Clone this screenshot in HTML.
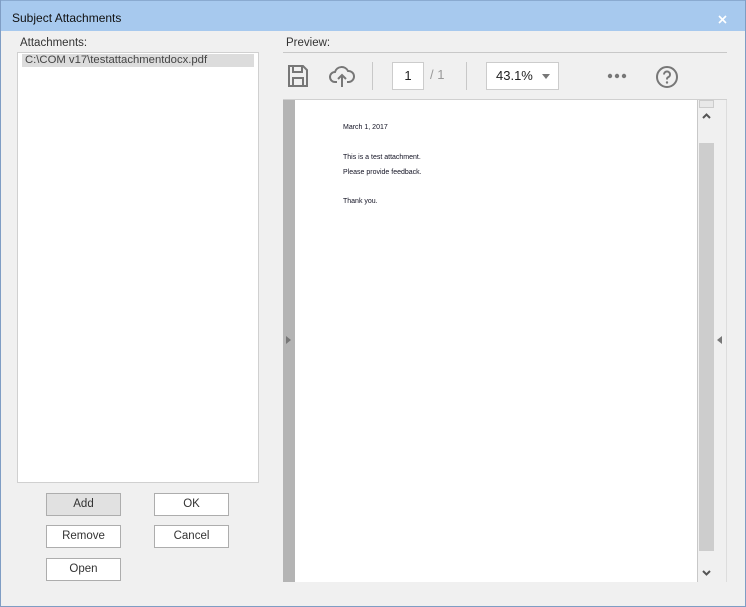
<!DOCTYPE html>
<html><head><style>
*{margin:0;padding:0;box-sizing:border-box}
body{width:746px;height:607px;background:#f0f0f0;font-family:"Liberation Sans",sans-serif;font-size:11px;color:#222;position:relative;overflow:hidden}
.a{position:absolute}
.win{left:0;top:0;width:746px;height:607px;border:1px solid #7f9dc4;border-top:none}
.title{left:0;top:0;width:746px;height:31px;background:#a7c9ee;border-top:1px solid #8aaad0}
.btn{position:absolute;width:75px;height:23px;border:1px solid #adadad;background:#fff;text-align:center;line-height:21px;font-size:11.5px;color:#333}
</style></head><body>
<div class="a title"></div>
<div class="a" style="left:12px;top:11px;font-size:12px;color:#111">Subject Attachments</div>
<svg class="a" style="left:718px;top:15px" width="9" height="9" viewBox="0 0 9 9"><path d="M1 1l7 7M8 1l-7 7" stroke="#fff" stroke-width="1.6"/></svg>
<div class="a win"></div>
<div class="a" style="left:20px;top:37px;color:#333;font-size:11.5px">Attachments:</div>
<div class="a" style="left:17px;top:52px;width:242px;height:431px;background:#fff;border:1px solid #d0d0d0"></div>
<div class="a" style="left:22px;top:54px;width:232px;height:13px;background:#dcdcdc"></div>
<div class="a" style="left:25px;top:54px;color:#444;font-size:11.3px">C:\COM v17\testattachmentdocx.pdf</div>
<div class="btn" style="left:46px;top:493px;background:#e1e1e1">Add</div>
<div class="btn" style="left:154px;top:493px">OK</div>
<div class="btn" style="left:46px;top:525px">Remove</div>
<div class="btn" style="left:154px;top:525px">Cancel</div>
<div class="btn" style="left:46px;top:558px">Open</div>

<div class="a" style="left:286px;top:37px;color:#333;font-size:11.5px">Preview:</div>
<div class="a" style="left:283px;top:52px;width:444px;height:1px;background:#c8c8c8"></div>
<div class="a" style="left:283px;top:99px;width:444px;height:1px;background:#d0d0d0"></div>
<svg class="a" style="left:286px;top:63px" width="24" height="26" viewBox="0 0 24 26"><path d="M3 3h14l4 4v16H3z M7 3v6h9V3 M7 23v-8h10v8" fill="none" stroke="#777" stroke-width="2"/></svg>
<svg class="a" style="left:329px;top:63px" width="26" height="26" viewBox="0 0 26 26"><path d="M8 19H6a5 5 0 0 1 0-10 7 7 0 0 1 13-1 5 5 0 0 1 1 11h-2 M13 24V12 M9 16l4-4 4 4" fill="none" stroke="#777" stroke-width="2"/></svg>
<div class="a" style="left:372px;top:62px;width:1px;height:28px;background:#c8c8c8"></div>
<div class="a" style="left:392px;top:62px;width:32px;height:28px;background:#fff;border:1px solid #ccc;text-align:center;line-height:26px;font-size:13px">1</div>
<div class="a" style="left:430px;top:67px;color:#999;font-size:13px">/ 1</div>
<div class="a" style="left:466px;top:62px;width:1px;height:28px;background:#c8c8c8"></div>
<div class="a" style="left:486px;top:62px;width:73px;height:28px;background:#fff;border:1px solid #ccc;line-height:26px;font-size:13px;padding-left:9px">43.1%</div>
<div class="a" style="left:542px;top:74px;border:4px solid transparent;border-top:5px solid #777"></div>
<svg class="a" style="left:607px;top:73px" width="20" height="6"><circle cx="3" cy="3" r="2.2" fill="#777"/><circle cx="10" cy="3" r="2.2" fill="#777"/><circle cx="17" cy="3" r="2.2" fill="#777"/></svg>
<svg class="a" style="left:655px;top:65px" width="24" height="24" viewBox="0 0 24 24"><circle cx="12" cy="12" r="10" fill="none" stroke="#777" stroke-width="2"/><path d="M9 9.5a3 3 0 1 1 4 2.8c-1 .4-1 1-1 2.2" fill="none" stroke="#777" stroke-width="2"/><circle cx="12" cy="17.5" r="1.2" fill="#777"/></svg>

<div class="a" style="left:283px;top:100px;width:12px;height:482px;background:#b4b4b4"></div>
<div class="a" style="left:286px;top:336px;border:4px solid transparent;border-left:5px solid #777;border-right:none"></div>
<div class="a" style="left:295px;top:100px;width:402px;height:482px;background:#fff"></div>
<div class="a" style="left:697px;top:100px;width:1px;height:482px;background:#c8c8c8"></div>
<div class="a" style="left:698px;top:100px;width:17px;height:482px;background:#f0f0f0"></div>
<div class="a" style="left:699px;top:100px;width:15px;height:8px;border:1px solid #ccc;background:#e8e8e8"></div>
<div class="a" style="left:699px;top:143px;width:15px;height:408px;background:#cdcdcd"></div>
<svg class="a" style="left:702px;top:113px" width="9" height="6"><path d="M1 5l3.5-3.5L8 5" fill="none" stroke="#555" stroke-width="2"/></svg>
<svg class="a" style="left:702px;top:570px" width="9" height="6"><path d="M1 1l3.5 3.5L8 1" fill="none" stroke="#555" stroke-width="2"/></svg>
<div class="a" style="left:726px;top:100px;width:1px;height:482px;background:#ddd"></div>
<div class="a" style="left:717px;top:336px;border:4px solid transparent;border-right:5px solid #777;border-left:none"></div>

<div class="a" style="left:343px;top:124px;font-size:7px;color:#112">March 1, 2017</div>
<div class="a" style="left:343px;top:154px;font-size:7px;color:#112">This is a test attachment.</div>
<div class="a" style="left:343px;top:169px;font-size:7px;color:#112">Please provide feedback.</div>
<div class="a" style="left:343px;top:198px;font-size:7px;color:#112">Thank you.</div>
</body></html>
